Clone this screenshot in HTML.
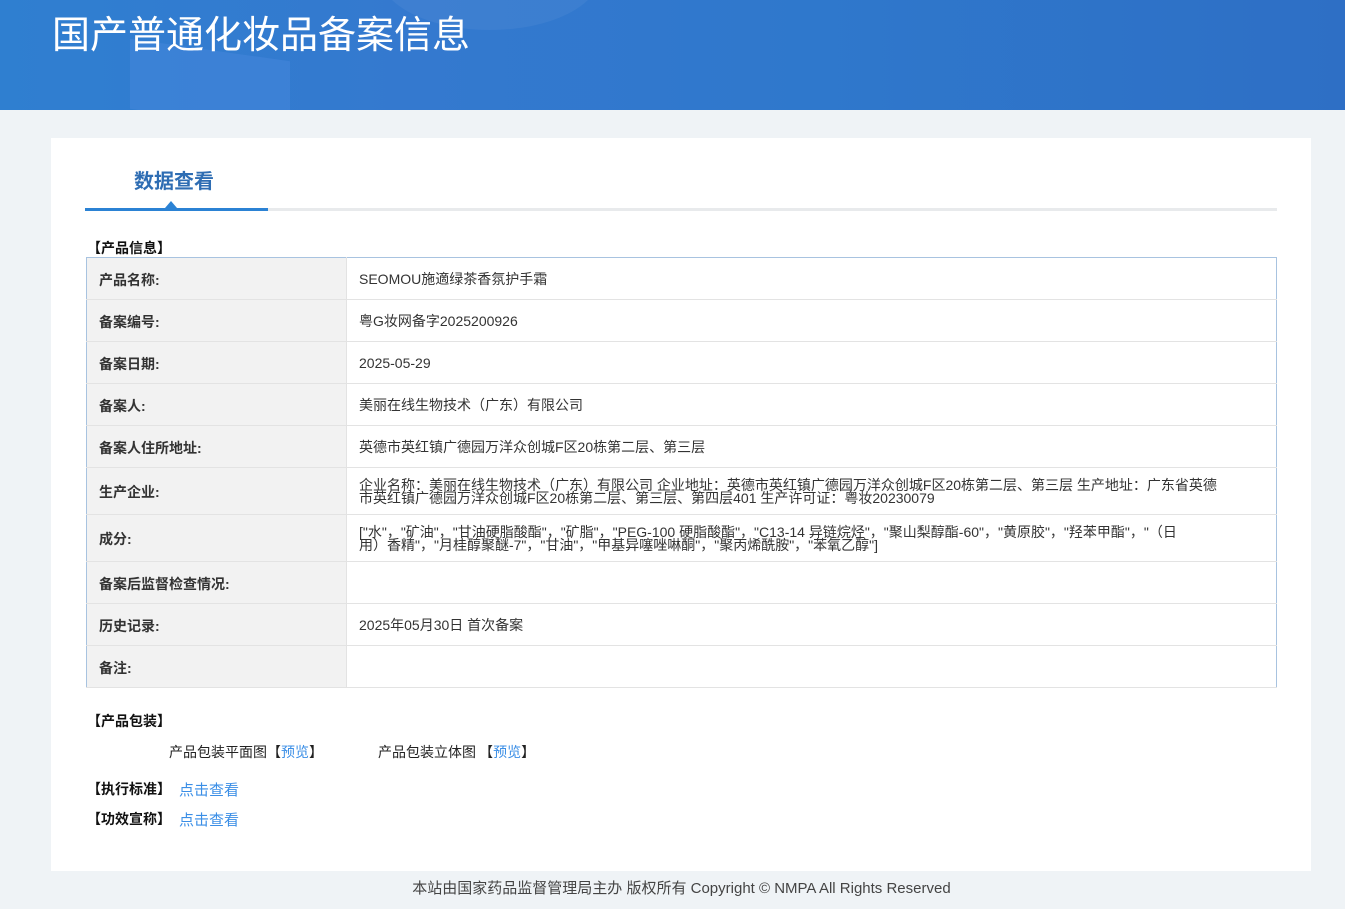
<!DOCTYPE html>
<html><head><meta charset="utf-8">
<style>
*{margin:0;padding:0;box-sizing:border-box}
body{width:1345px;height:909px;overflow:hidden;background:#eff3f6;font-family:"Liberation Sans","Noto Sans CJK SC",sans-serif;color:#333;position:relative}
.hd{position:absolute;left:0;top:0;width:1345px;height:110px;background:linear-gradient(90deg,#2f7fd0 0%,#3479cf 30%,#2f78cc 60%,#2e6fc5 100%);overflow:hidden}
.hd .s1{position:absolute;left:130px;top:50px;width:160px;height:70px;background:rgba(80,140,225,.35);transform:skewY(8deg)}
.hd .c1{position:absolute;left:380px;top:-80px;width:220px;height:110px;border-radius:50%;background:rgba(255,255,255,.05)}
.hd h1{position:absolute;left:52px;top:9px;font-size:38px;font-weight:normal;color:#fff;letter-spacing:0;font-family:"Noto Sans CJK SC",sans-serif;line-height:46px}
.main{position:absolute;left:51px;top:138px;width:1260px;height:733px;background:#fff}
.tab{position:absolute;left:34px;top:70px;width:1192px;height:3px;background:#e8eaec}
.tab .on{position:absolute;left:0;top:0;width:183px;height:3px;background:#2b82d4}
.tab .tri{position:absolute;left:80px;top:-7px;width:0;height:0;border-left:6px solid transparent;border-right:6px solid transparent;border-bottom:7px solid #2b82d4}
.tt{position:absolute;left:83px;top:27px;font-size:20px;font-weight:bold;color:#2e6db3;font-family:"Noto Sans CJK SC",sans-serif}
.sec{position:absolute;font-size:14px;font-weight:bold;color:#111;font-family:"Noto Sans CJK SC",sans-serif}
table{position:absolute;left:35px;top:119px;width:1191px;border-collapse:collapse;border:1px solid #a8c3e0;font-size:14px;font-family:"Liberation Sans","Noto Sans CJK SC",sans-serif}
td{border-bottom:1px solid #e3e3e3;vertical-align:middle;padding:2px 12px 0}
td.l{width:260px;background:#f2f2f2;font-weight:bold;color:#333;border-right:1px solid #e3e3e3}
td.v{color:#333;line-height:13px}
a{color:#3a8ee6;text-decoration:none}
.ln{position:absolute;font-size:14px;color:#222;font-family:"Noto Sans CJK SC",sans-serif}
.ft{position:absolute;left:0;top:877px;width:1345px;text-align:center;font-size:15px;color:#444;font-family:"Liberation Sans","Noto Sans CJK SC",sans-serif;padding-left:18px}
</style></head><body>
<div class="hd"><div class="s1"></div><div class="c1"></div><h1>国产普通化妆品备案信息</h1></div>
<div class="main">
<div class="tt">数据查看</div>
<div class="tab"><div class="on"></div><div class="tri"></div></div>
<div class="sec" style="left:36px;top:100px">【产品信息】</div>
<table>
<tr style="height:42px"><td class="l">产品名称:</td><td class="v">SEOMOU施適绿茶香氛护手霜</td></tr>
<tr style="height:42px"><td class="l">备案编号:</td><td class="v">粤G妆网备字2025200926</td></tr>
<tr style="height:42px"><td class="l">备案日期:</td><td class="v">2025-05-29</td></tr>
<tr style="height:42px"><td class="l">备案人:</td><td class="v">美丽在线生物技术（广东）有限公司</td></tr>
<tr style="height:42px"><td class="l">备案人住所地址:</td><td class="v">英德市英红镇广德园万洋众创城F区20栋第二层、第三层</td></tr>
<tr style="height:47px"><td class="l">生产企业:</td><td class="v" style="padding-right:50px">企业名称：美丽在线生物技术（广东）有限公司 企业地址：英德市英红镇广德园万洋众创城F区20栋第二层、第三层 生产地址：广东省英德市英红镇广德园万洋众创城F区20栋第二层、第三层、第四层401 生产许可证：粤妆20230079</td></tr>
<tr style="height:47px"><td class="l">成分:</td><td class="v" style="padding-right:50px">["水"，"矿油"，"甘油硬脂酸酯"，"矿脂"，"PEG-100 硬脂酸酯"，"C13-14 异链烷烃"，"聚山梨醇酯-60"，"黄原胶"，"羟苯甲酯"，"（日<br>用）香精"，"月桂醇聚醚-7"，"甘油"，"甲基异噻唑啉酮"，"聚丙烯酰胺"，"苯氧乙醇"]</td></tr>
<tr style="height:42px"><td class="l">备案后监督检查情况:</td><td class="v"></td></tr>
<tr style="height:42px"><td class="l">历史记录:</td><td class="v">2025年05月30日 首次备案</td></tr>
<tr style="height:42px"><td class="l">备注:</td><td class="v"></td></tr>
</table>
<div class="sec" style="left:36px;top:573px">【产品包装】</div>
<div class="ln" style="left:118px;top:604px">产品包装平面图【<a>预览</a>】</div>
<div class="ln" style="left:327px;top:604px">产品包装立体图 【<a>预览</a>】</div>
<div class="sec" style="left:36px;top:641px">【执行标准】</div><div class="ln" style="left:128px;top:641px;font-size:15px"><a>点击查看</a></div>
<div class="sec" style="left:36px;top:671px">【功效宣称】</div><div class="ln" style="left:128px;top:671px;font-size:15px"><a>点击查看</a></div>
</div>
<div class="ft">本站由国家药品监督管理局主办 版权所有 Copyright © NMPA All Rights Reserved</div>
</body></html>
